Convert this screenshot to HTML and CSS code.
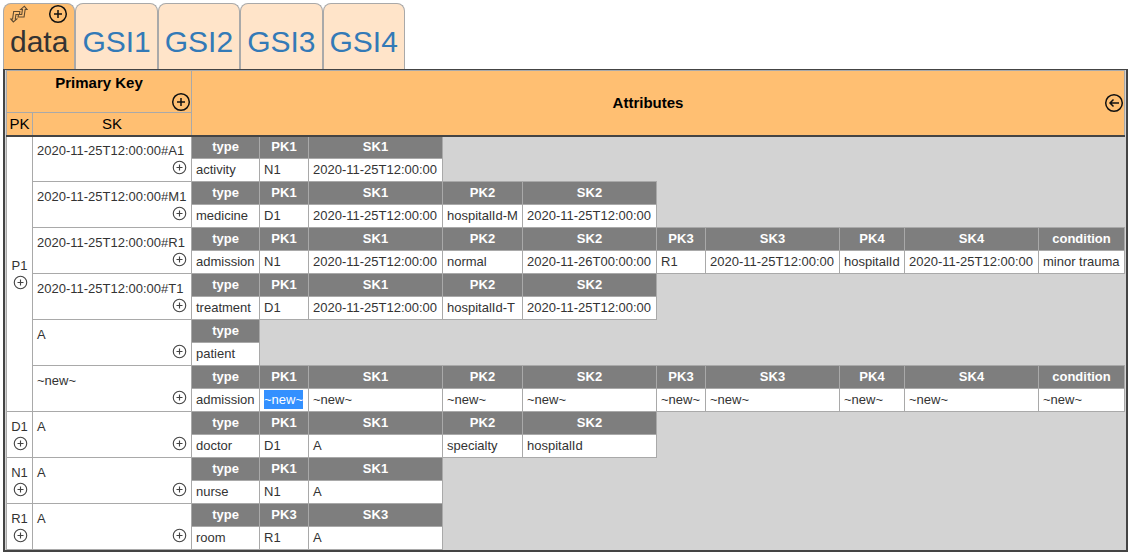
FILE: index.html
```html
<!DOCTYPE html>
<html lang="en">
<head>
<meta charset="utf-8">
<title>Data model</title>
<link rel="stylesheet" href="styles.css">
</head>
<body>
<svg class="defs" aria-hidden="true">
  <symbol id="plus" viewBox="0 0 20 20"><circle cx="10" cy="10" r="8.3"/><path d="M10 6v8M6 10h8"/></symbol>
  <symbol id="back" viewBox="0 0 20 20"><circle cx="10" cy="10" r="8.3"/><path d="M15 10H6M9.500 6.500L6 10l3.500 3.500"/></symbol>
  <symbol id="swap" viewBox="0 0 18 18"><path d="M3.300 14V6.500H9.500V9.500H6V14H7.500L4.500 17L1.500 14Z"/><path d="M14.500 4.500V12H8.500V9.500H11.800V4.500H10L13.200 1.200L16.400 4.500Z"/></symbol>
</svg>
<nav class="tabs">
  <div class="tab active">
    <div class="tools">
      <button class="icon swap" aria-label="Swap"><svg><use href="#swap"/></svg></button>
      <button class="icon large" aria-label="Add index"><svg><use href="#plus"/></svg></button>
    </div>
    <a href="#data">data</a>
  </div>
  <div class="tab"><a href="#gsi1">GSI1</a></div>
  <div class="tab"><a href="#gsi2">GSI2</a></div>
  <div class="tab"><a href="#gsi3">GSI3</a></div>
  <div class="tab"><a href="#gsi4">GSI4</a></div>
</nav>
<main class="frame">
<table class="model">
  <colgroup><col class="w-pk"><col class="w-sk"><col class="w-type"><col class="w-key"><col class="w-date"><col class="w-name"><col class="w-date"><col class="w-key"><col class="w-date"><col class="w-host"><col class="w-date"><col></colgroup>
  <thead>
    <tr class="head-top">
      <th colspan="2"><div class="primary"><span>Primary Key</span><button class="icon large" aria-label="Add sort key"><svg><use href="#plus"/></svg></button></div></th>
      <th colspan="10" rowspan="2"><div class="attributes"><span>Attributes</span><button class="icon large" aria-label="Collapse"><svg><use href="#back"/></svg></button></div></th>
    </tr>
    <tr class="head-keys"><th>PK</th><th>SK</th></tr>
  </thead>
  <tbody id="rows"></tbody>
</table>
</main>
<script src="model.js"></script>
</body>
</html>
```
FILE: styles.css
```css
* { box-sizing: border-box; }
body {
  margin: 0;
  padding: 3px 3px 2px;
  background: #fff;
  color: #333;
  font: 13px/18px "Liberation Sans", Arial, sans-serif;
}
.defs { position: absolute; width: 0; height: 0; }
.tabs { display: flex; height: 66px; }
.tab {
  display: flex;
  flex-direction: column;
  justify-content: flex-end;
  padding: 0 6px 9px;
  border: 1px solid #a9a9a9;
  border-bottom: 0;
  border-radius: 8px 8px 0 0;
  background: #ffe4c9;
}
.tab.active { background: #ffbf72; }
.tab a {
  color: #337ab7;
  font-size: 30px;
  line-height: 36px;
  text-decoration: none;
}
.tab.active a { color: #333; }
.tools { display: flex; justify-content: space-between; }
.icon {
  display: block;
  width: 15px;
  height: 15px;
  padding: 0;
  border: 0;
  background: none;
  color: #444;
  cursor: pointer;
}
.icon svg {
  display: block;
  width: 100%;
  height: 100%;
  fill: none;
  stroke: currentColor;
  stroke-width: 1.5;
}
.icon.large { width: 20px; height: 20px; color: #111; }
.icon.large svg { stroke-width: 1.5; }
.icon.swap { width: 18px; height: 20px; color: #5e4a30; }
.icon.swap svg { stroke-width: 1.1; transform: skewX(-8deg); }
.frame {
  border: 2px solid #444;
  border-top-width: 1px;
  padding: 0 1px;
  background: #d3d3d3;
}
.model { width: 100%; border-collapse: collapse; }
.w-pk { width: 26px; }
.w-sk { width: 159px; }
.w-type { width: 68px; }
.w-key { width: 49px; }
.w-date { width: 134px; }
.w-name { width: 80px; }
.w-host { width: 65px; }
th, td { border: 1px solid #a9a9a9; padding: 0; white-space: nowrap; }
thead th { background: #ffbf72; color: #000; font-size: 15px; }
.head-top { height: 42px; }
.head-keys { height: 23px; }
.head-keys th { border-bottom: 2px solid #444; font-weight: normal; }
thead th[rowspan] { border-bottom: 2px solid #444; }
.primary { display: flex; flex-direction: column; align-items: center; padding-top: 3px; }
.primary .icon { align-self: flex-end; }
.attributes { display: grid; grid-template-columns: 1fr 20px; align-items: center; }
tbody tr { height: 23px; }
tbody th { background: #7e7e7e; color: #fff; }
tbody td { padding: 0 4px; background: #fff; }
tbody td.blank { background: #d3d3d3; border: 0; }
.key-cell { display: flex; flex-direction: column; }
.key-cell .icon { align-self: flex-end; }
.pk .key-cell { align-items: center; }
mark { padding: 2px 0; background: #3390ff; color: #fff; }
```
FILE: model.js
```js
const D = '2020-11-25T12:00:00';
const NEW = '~new~';
const groups = [
  ['P1', [
    [D + '#A1', [['type', 'activity'], ['PK1', 'N1'], ['SK1', D]]],
    [D + '#M1', [['type', 'medicine'], ['PK1', 'D1'], ['SK1', D], ['PK2', 'hospitalId-M'], ['SK2', D]]],
    [D + '#R1', [['type', 'admission'], ['PK1', 'N1'], ['SK1', D], ['PK2', 'normal'], ['SK2', '2020-11-26T00:00:00'], ['PK3', 'R1'], ['SK3', D], ['PK4', 'hospitalId'], ['SK4', D], ['condition', 'minor trauma']]],
    [D + '#T1', [['type', 'treatment'], ['PK1', 'D1'], ['SK1', D], ['PK2', 'hospitalId-T'], ['SK2', D]]],
    ['A', [['type', 'patient']]],
    [NEW, [['type', 'admission'], ['PK1', NEW, true], ['SK1', NEW], ['PK2', NEW], ['SK2', NEW], ['PK3', NEW], ['SK3', NEW], ['PK4', NEW], ['SK4', NEW], ['condition', NEW]]],
  ]],
  ['D1', [['A', [['type', 'doctor'], ['PK1', 'D1'], ['SK1', 'A'], ['PK2', 'specialty'], ['SK2', 'hospitalId']]]]],
  ['N1', [['A', [['type', 'nurse'], ['PK1', 'N1'], ['SK1', 'A']]]]],
  ['R1', [['A', [['type', 'room'], ['PK3', 'R1'], ['SK3', 'A']]]]],
];
const keyCell = (text, rows, cls) =>
  `<td class="${cls}" rowspan="${rows}"><div class="key-cell"><span>${text}</span>` +
  `<button class="icon" aria-label="Add to ${text}"><svg><use href="#plus"/></svg></button></div></td>`;

let html = '';
for (const [pk, items] of groups) {
  items.forEach(([sk, attrs], i) => {
    html += '<tr>' + (i === 0 ? keyCell(pk, items.length * 2, 'pk') : '') + keyCell(sk, 2, 'sk');
    html += attrs.map(([name]) => `<th>${name}</th>`).join('');
    if (attrs.length < 10) html += `<td class="blank" rowspan="2" colspan="${10 - attrs.length}"></td>`;
    html += '</tr><tr>' + attrs.map(([, value, selected]) =>
      `<td>${selected ? `<mark>${value}</mark>` : value}</td>`).join('') + '</tr>';
  });
}
document.getElementById('rows').innerHTML = html;
```
